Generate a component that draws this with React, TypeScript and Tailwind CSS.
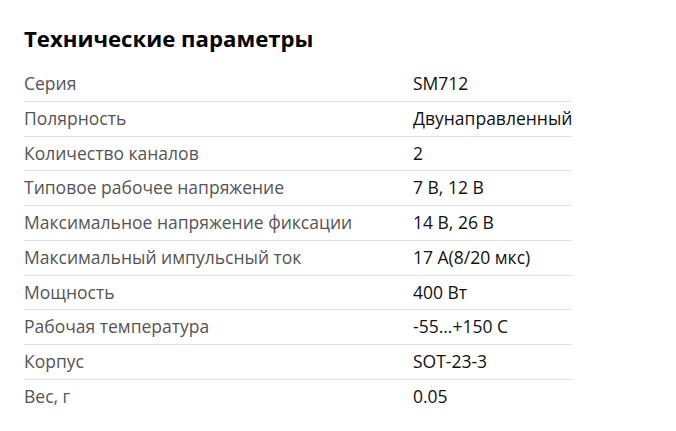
const rows: [string, string][] = [
  ['Серия', 'SM712'],
  ['Полярность', 'Двунаправленный'],
  ['Количество каналов', '2'],
  ['Типовое рабочее напряжение', '7 В, 12 В'],
  ['Максимальное напряжение фиксации', '14 В, 26 В'],
  ['Максимальный импульсный ток', '17 А(8/20 мкс)'],
  ['Мощность', '400 Вт'],
  ['Рабочая температура', '-55...+150 С'],
  ['Корпус', 'SOT-23-3'],
  ['Вес, г', '0.05'],
]

export default function App() {
  return (
    <div className="min-h-screen bg-white px-6 pt-[21px] font-['Open_Sans',sans-serif]">
      <h2 className="text-[22.2px] font-bold text-black leading-[36px] mb-[10px]">
        Технические параметры
      </h2>
      <table className="border-collapse text-[17.5px]">
        <tbody>
          {rows.map(([label, value], i) => (
            <tr key={label} className={i < rows.length - 1 ? 'border-b border-[#e2e2e2]' : ''}>
              <td className="w-[389px] py-[5px] leading-[23.75px] text-[#555555]">{label}</td>
              <td className="py-[5px] leading-[23.75px] text-[#111111] whitespace-nowrap">{value}</td>
            </tr>
          ))}
        </tbody>
      </table>
    </div>
  )
}
